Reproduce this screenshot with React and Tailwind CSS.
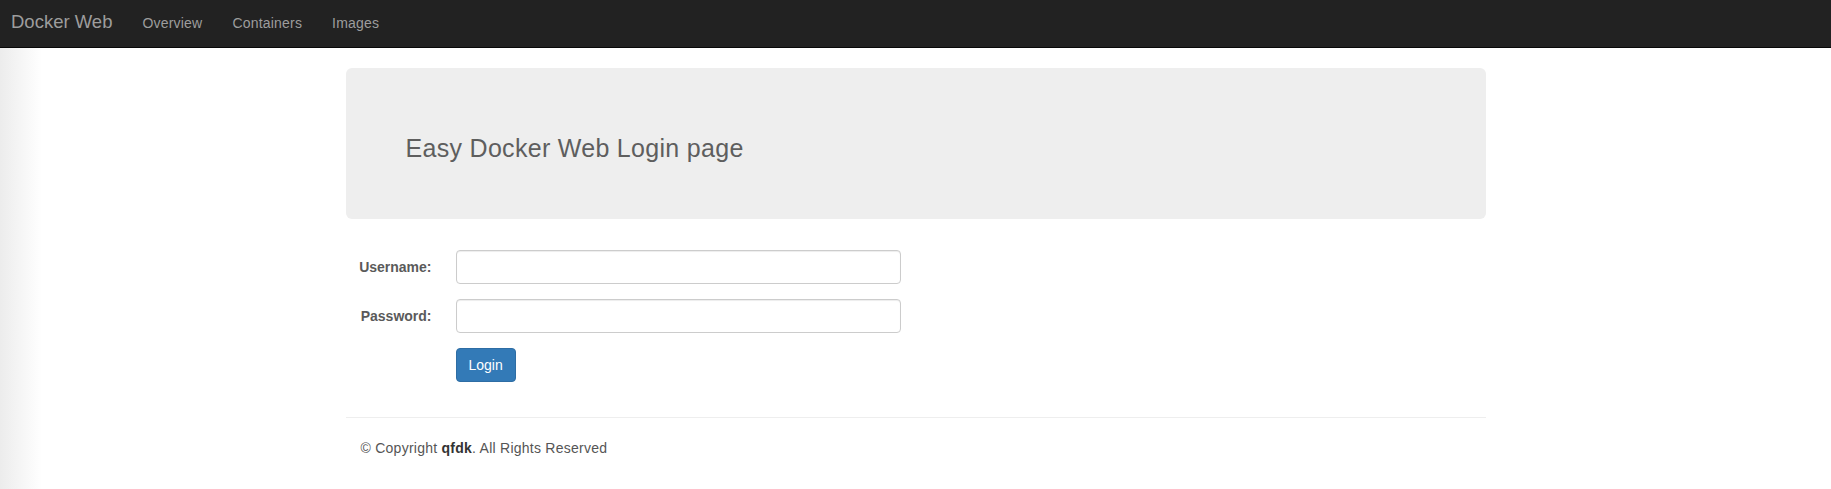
import React from 'react';

const links = ['Overview', 'Containers', 'Images'];

const Field = ({ label, type }) => (
    <div className="flex items-center mb-[15px]">
        <label className="w-[86px] text-right text-[14px] font-bold text-[#5a5a5a]">{label}</label>
        <input
            type={type}
            className="ml-[24px] w-[445px] h-[34px] px-3 bg-white border border-[#ccc] rounded-[4px] shadow-[inset_0_1px_1px_rgba(0,0,0,0.075)] outline-none text-[14px] text-[#555]"
        />
    </div>
);

export default function App() {
    return (
        <div className="min-h-screen bg-white font-['Liberation_Sans',Arial,sans-serif] text-[#333]">
            {/* navbar */}
            <nav className="h-[48px] bg-[#222] border-b border-[#080808] flex items-start">
                <a className="pl-[11px] pr-[15px] pt-[12px] text-[18.5px] leading-[20px] text-[#9d9d9d]">Docker Web</a>
                <ul className="flex">
                    {links.map((l) => (
                        <li key={l} className="px-[15px] pt-[13px] text-[14px] leading-[20px] tracking-[0.2px] text-[#9d9d9d]">{l}</li>
                    ))}
                </ul>
            </nav>

            <div className="min-h-[441px] bg-[linear-gradient(to_right,#ececec,#ffffff_42px)]">
                <main className="w-[1170px] mx-auto px-[15px] pt-[20px]">
                    {/* jumbotron */}
                    <div className="bg-[#eee] rounded-[6px] px-[60px] pt-[47px] pb-[48px] mb-[31px]">
                        <h3 className="mt-[20px] mb-[10px] text-[25px] leading-[26.4px] tracking-[0.3px] text-[#5e5e5e]">Easy Docker Web Login page</h3>
                    </div>

                    {/* login form */}
                    <form>
                        <Field label="Username:" type="text" />
                        <Field label="Password:" type="password" />
                        <div className="pl-[110px]">
                            <button
                                type="button"
                                className="h-[34px] px-[12px] bg-[#337ab7] border border-[#2e6da4] rounded-[4px] text-white text-[14px]"
                            >
                                Login
                            </button>
                        </div>
                    </form>

                    <hr className="mt-[35px] border-0 border-t border-[#eee]" />

                    <footer className="pt-[20px] pl-[15px] text-[14px] leading-[20px] tracking-[0.25px] text-[#555]">
                        © Copyright <b className="text-[#333]">qfdk</b>. All Rights Reserved
                    </footer>
                </main>
            </div>
        </div>
    );
}
